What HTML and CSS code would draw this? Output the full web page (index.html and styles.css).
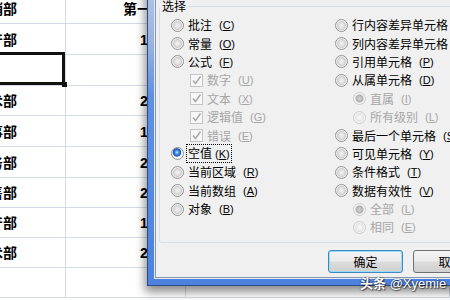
FILE: index.html
```html
<!DOCTYPE html>
<html lang="zh-CN">
<head>
    <meta charset="UTF-8">
    <meta name="viewport" content="width=device-width, initial-scale=1.0">
    <title>定位条件</title>
    <link rel="stylesheet" href="styles.css">
</head>
<body>
    <div class="sheet">
        <div class="cell">营销部</div><div class="cell num">第一季度</div><div class="cell"></div>
        <div class="cell">生产部</div><div class="cell num">15600</div><div class="cell"></div>
        <div class="cell active"></div><div class="cell num"></div><div class="cell"></div>
        <div class="cell">技术部</div><div class="cell num">23800</div><div class="cell"></div>
        <div class="cell">人事部</div><div class="cell num">18200</div><div class="cell"></div>
        <div class="cell">财务部</div><div class="cell num">26500</div><div class="cell"></div>
        <div class="cell">销售部</div><div class="cell num">21300</div><div class="cell"></div>
        <div class="cell">生产部</div><div class="cell num">17600</div><div class="cell"></div>
        <div class="cell">技术部</div><div class="cell num">24900</div><div class="cell"></div>
        <div class="cell"></div><div class="cell num"></div><div class="cell"></div>
    </div>

    <div class="dialog">
        <div class="panel">
            <fieldset class="group">
                <legend>选择</legend>
                <div class="options">
                    <div class="col">
                        <div class="opt"><span class="radio"></span>批注<span class="key">(<u>C</u>)</span></div>
                        <div class="opt"><span class="radio"></span>常量<span class="key">(<u>O</u>)</span></div>
                        <div class="opt"><span class="radio"></span>公式<span class="key">(<u>F</u>)</span></div>
                        <div class="opt sub-check off"><span class="check"><svg width="11" height="11" viewBox="0 0 11 11"><polyline points="2,5.5 4.5,8.5 9.5,1.5" fill="none" stroke="#a9a9a9" stroke-width="1.5"/></svg></span>数字<span class="key">(<u>U</u>)</span></div>
                        <div class="opt sub-check off"><span class="check"><svg width="11" height="11" viewBox="0 0 11 11"><polyline points="2,5.5 4.5,8.5 9.5,1.5" fill="none" stroke="#a9a9a9" stroke-width="1.5"/></svg></span>文本<span class="key">(<u>X</u>)</span></div>
                        <div class="opt sub-check off"><span class="check"><svg width="11" height="11" viewBox="0 0 11 11"><polyline points="2,5.5 4.5,8.5 9.5,1.5" fill="none" stroke="#a9a9a9" stroke-width="1.5"/></svg></span>逻辑值<span class="key">(<u>G</u>)</span></div>
                        <div class="opt sub-check off"><span class="check"><svg width="11" height="11" viewBox="0 0 11 11"><polyline points="2,5.5 4.5,8.5 9.5,1.5" fill="none" stroke="#a9a9a9" stroke-width="1.5"/></svg></span>错误<span class="key">(<u>E</u>)</span></div>
                        <div class="opt"><span class="radio on"></span><span class="focus">空值<span class="key">(<u>K</u>)</span></span></div>
                        <div class="opt"><span class="radio"></span>当前区域<span class="key">(<u>R</u>)</span></div>
                        <div class="opt"><span class="radio"></span>当前数组<span class="key">(<u>A</u>)</span></div>
                        <div class="opt"><span class="radio"></span>对象<span class="key">(<u>B</u>)</span></div>
                    </div>
                    <div class="col">
                        <div class="opt"><span class="radio"></span>行内容差异单元格<span class="key">(<u>W</u>)</span></div>
                        <div class="opt"><span class="radio"></span>列内容差异单元格<span class="key">(<u>M</u>)</span></div>
                        <div class="opt"><span class="radio"></span>引用单元格<span class="key">(<u>P</u>)</span></div>
                        <div class="opt"><span class="radio"></span>从属单元格<span class="key">(<u>D</u>)</span></div>
                        <div class="opt sub off"><span class="radio on"></span>直属<span class="key">(<u>I</u>)</span></div>
                        <div class="opt sub off"><span class="radio"></span>所有级别<span class="key">(<u>L</u>)</span></div>
                        <div class="opt"><span class="radio"></span>最后一个单元格<span class="key">(<u>S</u>)</span></div>
                        <div class="opt"><span class="radio"></span>可见单元格<span class="key">(<u>Y</u>)</span></div>
                        <div class="opt"><span class="radio"></span>条件格式<span class="key">(<u>T</u>)</span></div>
                        <div class="opt"><span class="radio"></span>数据有效性<span class="key">(<u>V</u>)</span></div>
                        <div class="opt sub off"><span class="radio on"></span>全部<span class="key">(<u>L</u>)</span></div>
                        <div class="opt sub off"><span class="radio"></span>相同<span class="key">(<u>E</u>)</span></div>
                    </div>
                </div>
            </fieldset>
            <div class="buttons">
                <div class="btn default">确定</div>
                <div class="btn">取消</div>
            </div>
        </div>
    </div>

    <div class="watermark"><b>头条</b> @Xyemie</div>
</body>
</html>
```

FILE: styles.css
```css
body {
    margin: 0;
    width: 450px;
    height: 300px;
    overflow: hidden;
    position: relative;
    background-color: #fff;
    font-family: "Liberation Sans", "Noto Sans CJK SC", sans-serif;
}

/* worksheet behind the dialog */
.sheet {
    display: grid;
    grid-template-columns: 94px 120px 1fr;
    grid-template-rows: 32px 31px 31px 30px 31px 31px 30px 30px 30px 30px;
    width: 478px;
    margin: -8px 0 0 -28px;
}
.cell {
    box-sizing: border-box;
    border-right: 1px solid #d5dbe6;
    border-bottom: 1px solid #d5dbe6;
    display: flex;
    align-items: flex-end;
    padding: 0 3px 6px;
    font-size: 14px;
    line-height: 16px;
    font-weight: bold;
    color: #000;
    white-space: nowrap;
    overflow: hidden;
}
.cell.num {
    justify-content: flex-end;
    padding-right: 6px;
}
.cell.active {
    position: relative;
    overflow: visible;
}
.cell.active::after {
    content: "";
    position: absolute;
    left: -4px;
    top: -3px;
    right: 0;
    bottom: 0;
    border: 3px solid #111;
}
.cell.active::before {
    content: "";
    position: absolute;
    right: -2px;
    bottom: -2px;
    width: 5px;
    height: 5px;
    background-color: #111;
    z-index: 1;
}

/* Go To Special dialog */
.dialog {
    position: absolute;
    left: 147px;
    top: -20px;
    width: 330px;
    padding: 0 0 7px 7px;
    border-left: 1px solid #2c4c88;
    border-bottom: 1px solid #2c4c88;
    background: linear-gradient(to bottom, #b4c6e4 0, #9ab4df 20%, #5f90e2 38%, #4c82de 100%);
    box-shadow: -1px 5px 9px 1px rgba(0, 0, 0, 0.45);
}
.panel {
    background-color: #f0f0f0;
    border-left: 1px solid #8896ad;
    border-bottom: 1px solid #8896ad;
    box-shadow: -1px 1px 0 #e2ecfb;
    padding: 19px 0 4px 3px;
    font-family: "Noto Sans CJK SC", "Liberation Sans", sans-serif;
    font-size: 12px;
    color: #000;
}
.group {
    margin: 0;
    padding: 3px 0 5px 0;
    border: 1px solid #d5dfe5;
    border-radius: 3px;
}
.group legend {
    padding: 0 2px;
    font-size: 12px;
    line-height: 14px;
}
.options {
    display: grid;
    grid-template-columns: 164px 1fr;
    padding-left: 11px;
}
.opt {
    display: flex;
    align-items: center;
    gap: 4px;
    height: 18.4px;
    white-space: nowrap;
    line-height: 14px;
}
.opt.sub-check {
    padding-left: 19px;
}
.opt.sub {
    padding-left: 18px;
}
.opt.off {
    color: #a6a6a6;
}
.key {
    margin-left: 3px;
    font-family: "Liberation Sans", sans-serif;
    font-size: 11px;
}

.radio {
    flex: none;
    box-sizing: border-box;
    width: 13px;
    height: 13px;
    border-radius: 50%;
    border: 1px solid #949494;
    background: radial-gradient(circle, #f4f4f4 0, #e2e2e2 2.5px, #cfcfcf 4px, #eeeeee 5px, #fbfbfb 6px);
}
.radio.on {
    background: radial-gradient(circle at 45% 40%, #bfe8ff 0, #3f93e8 2px, #1c52b3 3.8px, #e9e9e9 4.6px, #fbfbfb 6px);
}
.off .radio {
    border-color: #cbcbcb;
    background: radial-gradient(circle, #f7f7f7 0, #ececec 3px, #e1e1e1 4px, #f4f4f4 5px, #fcfcfc 6px);
}
.off .radio.on {
    background: radial-gradient(circle, #d2d2d2 0, #b0b0b0 3.5px, #efefef 4.5px, #fcfcfc 6px);
}
.check {
    flex: none;
    box-sizing: border-box;
    width: 13px;
    height: 13px;
    border: 1px solid #c4c4c4;
    background-color: #f7f7f7;
    display: flex;
}
.focus {
    border: 1px dotted #000;
    padding: 0 1px;
    margin-left: -2px;
    line-height: 15px;
}

.buttons {
    display: flex;
    gap: 10px;
    margin-top: 7px;
    padding-left: 169px;
}
.btn {
    flex: none;
    box-sizing: border-box;
    width: 75px;
    height: 23px;
    border: 1px solid #707070;
    border-radius: 3px;
    background: linear-gradient(to bottom, #f3f3f3 0, #ebebeb 48%, #dddddd 52%, #cfcfcf 100%);
    display: flex;
    align-items: center;
    justify-content: center;
}
.btn.default {
    border-color: #3c8ac2;
    box-shadow: inset 0 0 0 1px #9ddaf6;
}

.watermark {
    position: absolute;
    left: 360px;
    top: 275px;
    font-size: 13px;
    line-height: 16px;
    color: #fff;
    text-shadow: 0 0 2px rgba(0, 0, 0, 0.7), 1px 1px 1px rgba(0, 0, 0, 0.5);
    white-space: nowrap;
}
.watermark b {
    font-family: "Noto Sans CJK SC", sans-serif;
}
```
